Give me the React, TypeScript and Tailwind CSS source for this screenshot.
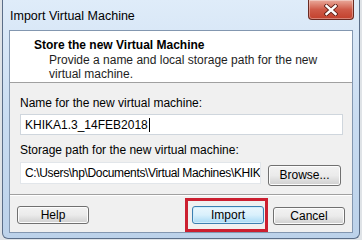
const font = { fontFamily: '"Liberation Sans", Arial, sans-serif' };

function WinButton({ label, focused }: { label: string; focused?: boolean }) {
  return (
    <button
      className={
        focused
          ? "w-[72px] h-[18px] rounded-[3px] border border-[#3c7fb1] bg-gradient-to-b from-[#eaf6fd] via-[#d9f0fc] to-[#a7d9f5] text-[12px] leading-none text-black shadow-[inset_0_0_0_1px_#d0ecfb]"
          : "w-[72px] h-[18px] rounded-[3px] border border-[#707070] bg-gradient-to-b from-[#f2f2f2] via-[#ebebeb] to-[#cfcfcf] text-[12px] leading-none text-black shadow-[inset_0_0_0_1px_#fcfcfc]"
      }
    >
      {label}
    </button>
  );
}

export default function App() {
  return (
    <div className="w-[362px] h-[240px] bg-[#dfe3e7] overflow-hidden pl-[2px] pr-[2px]" style={font}>
      <div className="h-[239px] flex flex-col border border-t-0 border-[#5b6e88] rounded-b-[6px] bg-gradient-to-b from-[#dfecf9] via-[#c9dcf1] to-[#bcd2ea] px-[6px] pb-[5px]">
        {/* title bar */}
        <div className="h-[31px] flex items-start justify-between">
          <span className="mt-[9px] ml-[1px] text-[12.5px] leading-[14px] text-black">Import Virtual Machine</span>
          <div className="w-[46px] h-[20px] mr-[-1px] rounded-b-[4px] border border-t-0 border-[#6a2a22] bg-gradient-to-b from-[#e9a99b] via-[#cf5a48] to-[#c2402c] shadow-[inset_0_0_0_1px_rgba(255,255,255,0.35)] flex items-center justify-center">
            <svg width="14" height="12" viewBox="0 0 14 12">
              <path d="M2.5 2 L11.5 10 M11.5 2 L2.5 10" stroke="#5a1c14" strokeWidth="4.2" strokeLinecap="square" />
              <path d="M2.5 2 L11.5 10 M11.5 2 L2.5 10" stroke="#ffffff" strokeWidth="2.4" strokeLinecap="square" />
            </svg>
          </div>
        </div>
        {/* client area */}
        <div className="flex-1 flex flex-col border border-[#8397b0] bg-[#f0f0f0]">
          <div className="h-[52px] bg-white border-b border-[#a0a0a0] pl-[24px] pt-[7px]">
            <div className="text-[12px] leading-[15px] font-bold text-black">Store the new Virtual Machine</div>
            <div className="pl-[15px] text-[12px] leading-[14px] text-[#1e1e1e]">
              Provide a name and local storage path for the new
              <br />
              virtual machine.
            </div>
          </div>
          <div className="flex flex-col px-[10px] pt-[13px]">
            <div className="text-[12px] leading-[14px] text-black">Name for the new virtual machine:</div>
            <div className="mt-[4px] h-[21px] w-[323px] bg-white border border-[#cfd6dd] flex items-center pl-[4px] text-[12px] text-black">
              KHIKA1.3_14FEB2018<span className="w-px h-[14px] bg-black ml-px" />
            </div>
            <div className="mt-[8px] text-[12px] leading-[14px] text-black">Storage path for the new virtual machine:</div>
            <div className="mt-[5px] flex items-start">
              <input
                readOnly
                value="C:\Users\hp\Documents\Virtual Machines\KHIKA1.3_14FEB2018"
                className="h-[22px] w-[241px] bg-white border border-[#e2e6ea] pl-[4px] pr-0 text-[12px] text-black tracking-[-0.35px] outline-none"
                style={font}
              />
              <div className="ml-[7px]">
                <button className="w-[73px] h-[21px] rounded-[3px] border border-[#707070] bg-gradient-to-b from-[#f2f2f2] via-[#ebebeb] to-[#cfcfcf] text-[12px] leading-none text-black shadow-[inset_0_0_0_1px_#fcfcfc]">
                  Browse...
                </button>
              </div>
            </div>
          </div>
          <div className="mt-[8px] border-t border-[#a0a0a0] shadow-[0_1px_0_#ffffff]" />
          <div className="mt-[3px] flex items-center pl-[7px] pr-[7px]">
            <WinButton label="Help" />
            <div className="ml-auto border-[3px] border-[#cc1f30] pl-[4px] pr-[1px] pt-[5px] pb-[5px] flex">
              <WinButton label="Import" focused />
            </div>
            <div className="ml-[5px]">
              <WinButton label="Cancel" />
            </div>
          </div>
        </div>
      </div>
    </div>
  );
}
